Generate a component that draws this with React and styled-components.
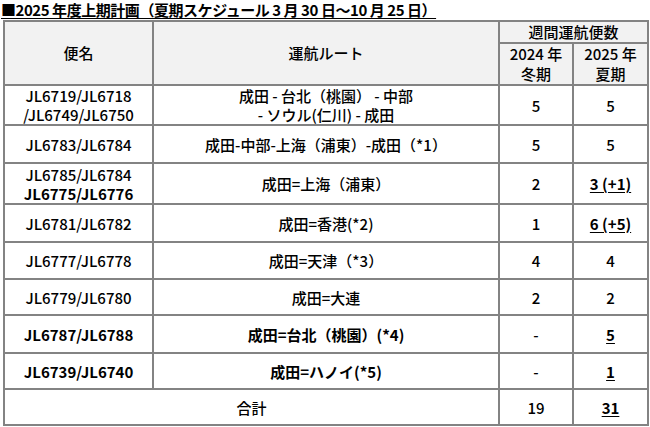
import React from 'react';
import styled, { createGlobalStyle } from 'styled-components';

const GlobalStyle = createGlobalStyle`
  body {
    margin: 0;
    background: #ffffff;
    font-family: "Noto Sans CJK JP", "Noto Sans", sans-serif;
    color: #000;
  }
`;

const Page = styled.div`
  width: 650px;
  height: 427px;
  overflow: hidden;
`;

const Title = styled.div`
  width: fit-content;
  font-size: 15px;
  font-weight: 700;
  line-height: 20px;
  height: 20px;
  padding-left: 1px;
  text-decoration: underline;
  text-underline-offset: 2px;
  letter-spacing: -0.45px;
  white-space: nowrap;
`;

const Table = styled.table`
  border-collapse: collapse;
  table-layout: fixed;
  width: 644px;
  margin-left: 3px;
  font-size: 15px;
`;

const HeadCell = styled.th`
  border: 2px solid #838383;
  background: #f2f2f2;
  font-weight: 500;
  text-align: center;
  vertical-align: middle;
  line-height: 20px;
  padding: 0;
  height: ${p => p.$h}px;
`;

const Cell = styled.td`
  border: 2px solid #838383;
  text-align: center;
  vertical-align: middle;
  line-height: 19px;
  padding: 0;
  font-weight: ${p => (p.$bold ? 700 : 500)};
  height: ${p => p.$h}px;
`;

const Line = styled.div`
  font-weight: ${p => (p.$bold ? 700 : 'inherit')};
  white-space: nowrap;
`;

const Count = styled.span`
  font-weight: ${p => (p.$strong ? 700 : 500)};
  text-decoration: ${p => (p.$strong ? 'underline' : 'none')};
  text-underline-offset: 2px;
`;

const rows = [
  {
    flight: [{ t: 'JL6719/JL6718' }, { t: '/JL6749/JL6750' }],
    route: ['成田 - 台北（桃園） - 中部', '- ソウル(仁川) - 成田'],
    w24: '5', s25: '5', h: 38,
  },
  {
    flight: [{ t: 'JL6783/JL6784' }],
    route: ['成田-中部-上海（浦東）-成田（*1）'],
    w24: '5', s25: '5', h: 36,
  },
  {
    flight: [{ t: 'JL6785/JL6784' }, { t: 'JL6775/JL6776', bold: true }],
    route: ['成田=上海（浦東）'],
    w24: '2', s25: '3 (+1)', strong: true, h: 39,
  },
  {
    flight: [{ t: 'JL6781/JL6782' }],
    route: ['成田=香港(*2)'],
    w24: '1', s25: '6 (+5)', strong: true, h: 36,
  },
  {
    flight: [{ t: 'JL6777/JL6778' }],
    route: ['成田=天津（*3）'],
    w24: '4', s25: '4', h: 35,
  },
  {
    flight: [{ t: 'JL6779/JL6780' }],
    route: ['成田=大連'],
    w24: '2', s25: '2', h: 34,
  },
  {
    flight: [{ t: 'JL6787/JL6788', bold: true }],
    route: ['成田=台北（桃園）(*4)'], bold: true,
    w24: '-', s25: '5', strong: true, h: 36,
  },
  {
    flight: [{ t: 'JL6739/JL6740', bold: true }],
    route: ['成田=ハノイ(*5)'], bold: true,
    w24: '-', s25: '1', strong: true, h: 34,
  },
];

export default function App() {
  return (
    <Page>
      <GlobalStyle />
      <Title>■2025 年度上期計画（夏期スケジュール 3 月 30 日～10 月 25 日）</Title>
      <Table>
        <colgroup>
          <col style={{ width: 149 }} />
          <col style={{ width: 346 }} />
          <col style={{ width: 74 }} />
          <col style={{ width: 75 }} />
        </colgroup>
        <thead>
          <tr>
            <HeadCell rowSpan={2}>便名</HeadCell>
            <HeadCell rowSpan={2}>運航ルート</HeadCell>
            <HeadCell colSpan={2} $h={19}>週間運航便数</HeadCell>
          </tr>
          <tr>
            <HeadCell $h={40}>2024 年<br />冬期</HeadCell>
            <HeadCell $h={40}>2025 年<br />夏期</HeadCell>
          </tr>
        </thead>
        <tbody>
          {rows.map((r, i) => (
            <tr key={i}>
              <Cell $h={r.h}>
                {r.flight.map((f, j) => (
                  <Line key={j} $bold={f.bold}>{f.t}</Line>
                ))}
              </Cell>
              <Cell $h={r.h} $bold={r.bold}>
                {r.route.map((l, j) => (
                  <Line key={j}>{l}</Line>
                ))}
              </Cell>
              <Cell $h={r.h}>{r.w24}</Cell>
              <Cell $h={r.h}>
                <Count $strong={r.strong}>{r.s25}</Count>
              </Cell>
            </tr>
          ))}
          <tr>
            <Cell colSpan={2} $h={34}>合計</Cell>
            <Cell $h={34}>19</Cell>
            <Cell $h={34}>
              <Count $strong>31</Count>
            </Cell>
          </tr>
        </tbody>
      </Table>
    </Page>
  );
}
